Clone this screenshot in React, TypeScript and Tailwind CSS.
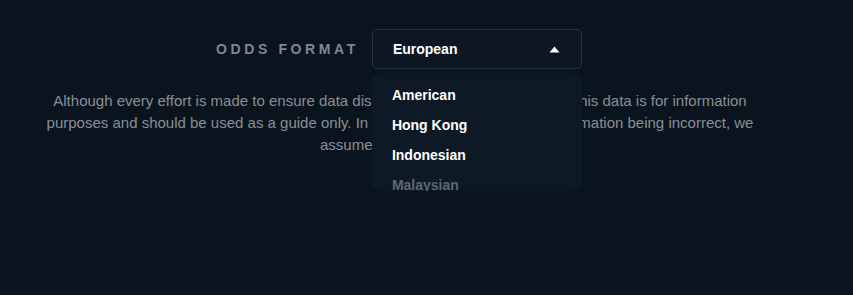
import { useState } from "react";

const formats = ["American", "Hong Kong", "Indonesian", "Malaysian"];

export default function App() {
  const [selected] = useState("European");

  return (
    <div
      className="h-[295px] w-full overflow-hidden bg-[#0a141e] pr-[53px] pt-[29px]"
      style={{ fontFamily: '"Liberation Sans", Arial, sans-serif' }}
    >
      <div className="flex items-center justify-center gap-[13px] pr-[2px]">
        <span className="text-[14px] font-bold tracking-[3.6px] text-[#7f868d]">ODDS FORMAT</span>
        <div className="relative">
          <button
            type="button"
            className="flex h-[40px] w-[210px] items-center justify-between rounded-[5px] border border-[#26323d] bg-[#0c1722] pl-[20px] pr-[20px] text-[14px] font-bold text-white"
          >
            <span>{selected}</span>
            <svg width="11" height="7" viewBox="0 0 11 7" className="mr-[1px]">
              <path d="M5.5 0.5 L10.5 6.5 L0.5 6.5 Z" fill="#ffffff" />
            </svg>
          </button>
          <div className="absolute left-0 top-[44px] z-10 h-[118px] w-[210px] overflow-hidden rounded-[8px] bg-[#0d1924] pt-[7px]">
            {formats.map((name, i) => (
              <div
                key={name}
                className={
                  "flex h-[30px] items-center px-[20px] text-[14px] font-bold " +
                  (i === formats.length - 1 ? "text-[#5d6873]" : "text-white")
                }
              >
                {name}
              </div>
            ))}
          </div>
        </div>
      </div>
      <p className="mx-auto mt-[21px] max-w-[730px] text-center text-[15px] leading-[22px] text-[#8a8f95]">
        Although every effort is made to ensure data displayed on our site is accurate, this data is for information
        purposes and should be used as a guide only. In the event of any particular information being incorrect, we
        assume no liability for it.
      </p>
    </div>
  );
}
